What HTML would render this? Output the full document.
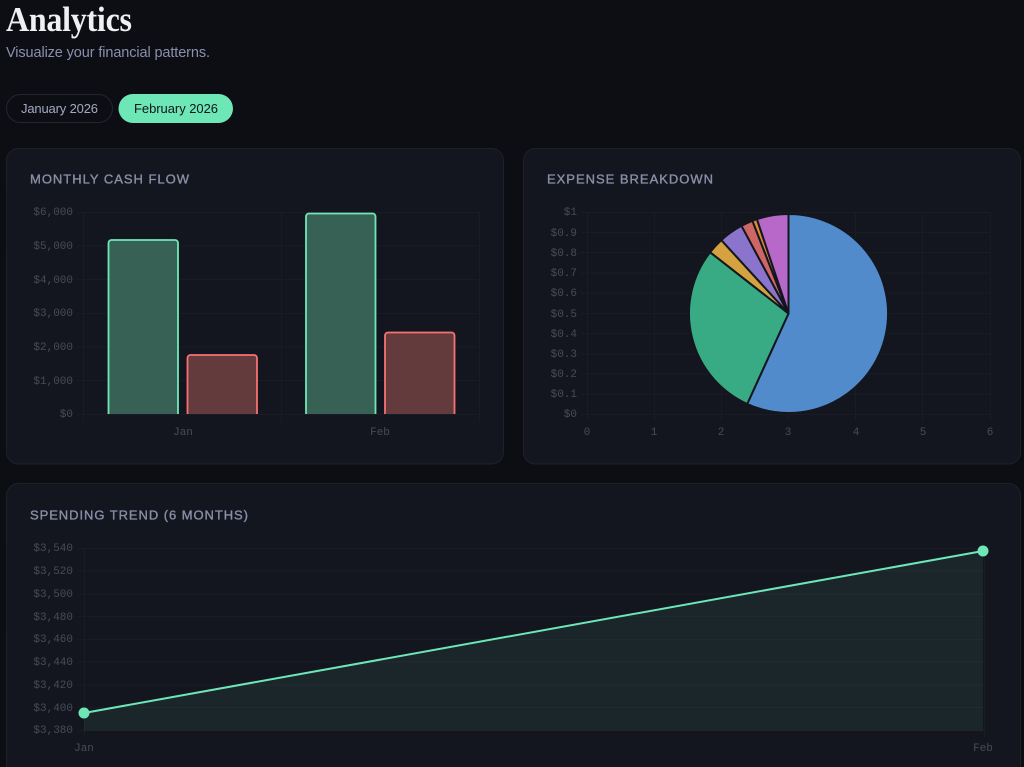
<!DOCTYPE html>
<html lang="en">
<head>
<meta charset="utf-8">
<title>Analytics</title>
<style>
html,body{margin:0;padding:0;background:#0d0e13;width:1024px;height:767px;overflow:hidden}
svg{display:block}
text{font-family:"Liberation Sans",sans-serif}
.m{font-family:"Liberation Mono",monospace;font-size:11px;fill:#484a5a}
.e{text-anchor:end}
.c{text-anchor:middle}
.h{font-size:13px;fill:#8a8fa8;stroke:#8a8fa8;stroke-width:.35px}
.g{stroke:#1a1c25;stroke-width:1;fill:none}
.card{fill:#14161f;stroke:#1f2129;stroke-width:1}
</style>
</head>
<body>
<svg width="1024" height="767" viewBox="0 0 1024 767" xmlns="http://www.w3.org/2000/svg">
<text transform="translate(6 31) scale(1 1.08)" x="0" y="0" textLength="126" lengthAdjust="spacing" style="font-family:'Liberation Serif',serif;font-weight:700;font-size:32px;fill:#f0f0f2">Analytics</text>
<text x="6" y="57" textLength="204" lengthAdjust="spacing" style="font-size:14.5px;fill:#8a8fb0">Visualize your financial patterns.</text>

<rect x="6.500" y="94.500" width="106" height="28" rx="14" fill="none" stroke="#24262f"/>
<text x="21" y="113" textLength="77" lengthAdjust="spacing" style="font-size:13px;fill:#a4a8c2">January 2026</text>
<rect x="118.500" y="94" width="114.500" height="29" rx="14.500" fill="#6ee7b7"/>
<text x="134" y="113" textLength="84" lengthAdjust="spacing" style="font-size:13px;fill:#12141c">February 2026</text>

<rect class="card" x="6.500" y="148.500" width="497" height="315.500" rx="12"/>
<rect class="card" x="523.500" y="148.500" width="497" height="315.500" rx="12"/>
<rect class="card" x="6.500" y="483.500" width="1014" height="320" rx="12"/>

<text class="h" x="30" y="183.500" textLength="159" lengthAdjust="spacing">MONTHLY CASH FLOW</text>
<text class="h" x="547" y="183.500" textLength="166" lengthAdjust="spacing">EXPENSE BREAKDOWN</text>
<text class="h" x="30" y="519.500" textLength="218" lengthAdjust="spacing">SPENDING TREND (6 MONTHS)</text>

<!-- Chart 1 -->
<path class="g" d="M77 212.500H479M77 246H479M77 279.500H479M77 313.500H479M77 347H479M77 380.500H479M77 414.500H479M83.500 212V422M281.500 212V422M479.500 212V422"/>
<text class="m e" x="73" y="215">$6,000</text>
<text class="m e" x="73" y="249">$5,000</text>
<text class="m e" x="73" y="283">$4,000</text>
<text class="m e" x="73" y="316">$3,000</text>
<text class="m e" x="73" y="350">$2,000</text>
<text class="m e" x="73" y="384">$1,000</text>
<text class="m e" x="73" y="417">$0</text>
<text class="m c" x="183" y="435">Jan</text>
<text class="m c" x="380" y="435">Feb</text>
<g stroke-width="1.800">
<path d="M108.500 414V243a3 3 0 0 1 3-3H175a3 3 0 0 1 3 3V414Z" stroke="none" fill="#386155"/>
<path d="M108.500 414V243a3 3 0 0 1 3-3H175a3 3 0 0 1 3 3V414" fill="none" stroke="#6ee7b7"/>
<path d="M187.500 414V358a3 3 0 0 1 3-3H254a3 3 0 0 1 3 3V414Z" fill="#643b3c" stroke="none"/>
<path d="M187.500 414V358a3 3 0 0 1 3-3H254a3 3 0 0 1 3 3V414" fill="none" stroke="#f87171"/>
<path d="M306 414V216.500a3 3 0 0 1 3-3H372.500a3 3 0 0 1 3 3V414Z" fill="#386155" stroke="none"/>
<path d="M306 414V216.500a3 3 0 0 1 3-3H372.500a3 3 0 0 1 3 3V414" fill="none" stroke="#6ee7b7"/>
<path d="M385 414V335.500a3 3 0 0 1 3-3H451.500a3 3 0 0 1 3 3V414Z" fill="#643b3c" stroke="none"/>
<path d="M385 414V335.500a3 3 0 0 1 3-3H451.500a3 3 0 0 1 3 3V414" fill="none" stroke="#f87171"/>
</g>

<!-- Chart 2 -->
<path class="g" d="M581 212.500H990M581 232.500H990M581 252.500H990M581 273H990M581 293H990M581 313.500H990M581 333.500H990M581 354H990M581 374H990M581 394H990M581 414.500H990M587.500 212V421M654.500 212V421M721.500 212V421M788.500 212V421M855.500 212V421M922.500 212V421M990.500 212V421"/>
<text class="m e" x="577" y="215">$1</text>
<text class="m e" x="577" y="236">$0.9</text>
<text class="m e" x="577" y="256">$0.8</text>
<text class="m e" x="577" y="276">$0.7</text>
<text class="m e" x="577" y="296">$0.6</text>
<text class="m e" x="577" y="317">$0.5</text>
<text class="m e" x="577" y="337">$0.4</text>
<text class="m e" x="577" y="357">$0.3</text>
<text class="m e" x="577" y="377">$0.2</text>
<text class="m e" x="577" y="397">$0.1</text>
<text class="m e" x="577" y="417">$0</text>
<text class="m c" x="587" y="435">0</text>
<text class="m c" x="654" y="435">1</text>
<text class="m c" x="721" y="435">2</text>
<text class="m c" x="788" y="435">3</text>
<text class="m c" x="856" y="435">4</text>
<text class="m c" x="923" y="435">5</text>
<text class="m c" x="990" y="435">6</text>
<g stroke="#14161f" stroke-width="2" stroke-linejoin="round">
<path d="M788.500 313.500L788.500 214A99.500 99.500 0 1 1 747.200 404Z" fill="#528bcc"/>
<path d="M788.500 313.500L747.200 404A99.500 99.500 0 0 1 710.100 252.200Z" fill="#38ab84"/>
<path d="M788.500 313.500L710.100 252.200A99.500 99.500 0 0 1 721.300 240.100Z" fill="#d4a33f"/>
<path d="M788.500 313.500L721.300 240.100A99.500 99.500 0 0 1 741.500 225.800Z" fill="#8b74cc"/>
<path d="M788.500 313.500L741.500 225.800A99.500 99.500 0 0 1 752.400 220.800Z" fill="#cf6666"/>
<path d="M788.500 313.500L752.400 220.800A99.500 99.500 0 0 1 756.900 219.100Z" fill="#d98c33"/>
<path d="M788.500 313.500L756.900 219.100A99.500 99.500 0 0 1 788.500 214Z" fill="#b868c8"/>
</g>

<!-- Chart 3 -->
<path class="g" d="M78 548.500H984M78 571H984M78 594H984M78 616.500H984M78 639.500H984M78 662H984M78 685H984M78 707.500H984M78 730.500H984M84.500 548V737M984.500 548V737"/>
<text class="m e" x="73" y="551">$3,540</text>
<text class="m e" x="73" y="574">$3,520</text>
<text class="m e" x="73" y="597">$3,500</text>
<text class="m e" x="73" y="620">$3,480</text>
<text class="m e" x="73" y="642">$3,460</text>
<text class="m e" x="73" y="665">$3,440</text>
<text class="m e" x="73" y="688">$3,420</text>
<text class="m e" x="73" y="711">$3,400</text>
<text class="m e" x="73" y="733">$3,380</text>
<text class="m c" x="84" y="751">Jan</text>
<text class="m c" x="983" y="751">Feb</text>
<path d="M84 713L983 551V730.500H84Z" fill="#6ee7b7" fill-opacity=".08"/>
<path d="M84 713L983 551" stroke="#6ee7b7" stroke-width="2" fill="none"/>
<circle cx="84" cy="713" r="5.500" fill="#6ee7b7"/>
<circle cx="983" cy="551" r="5.500" fill="#6ee7b7"/>
</svg>
</body>
</html>
